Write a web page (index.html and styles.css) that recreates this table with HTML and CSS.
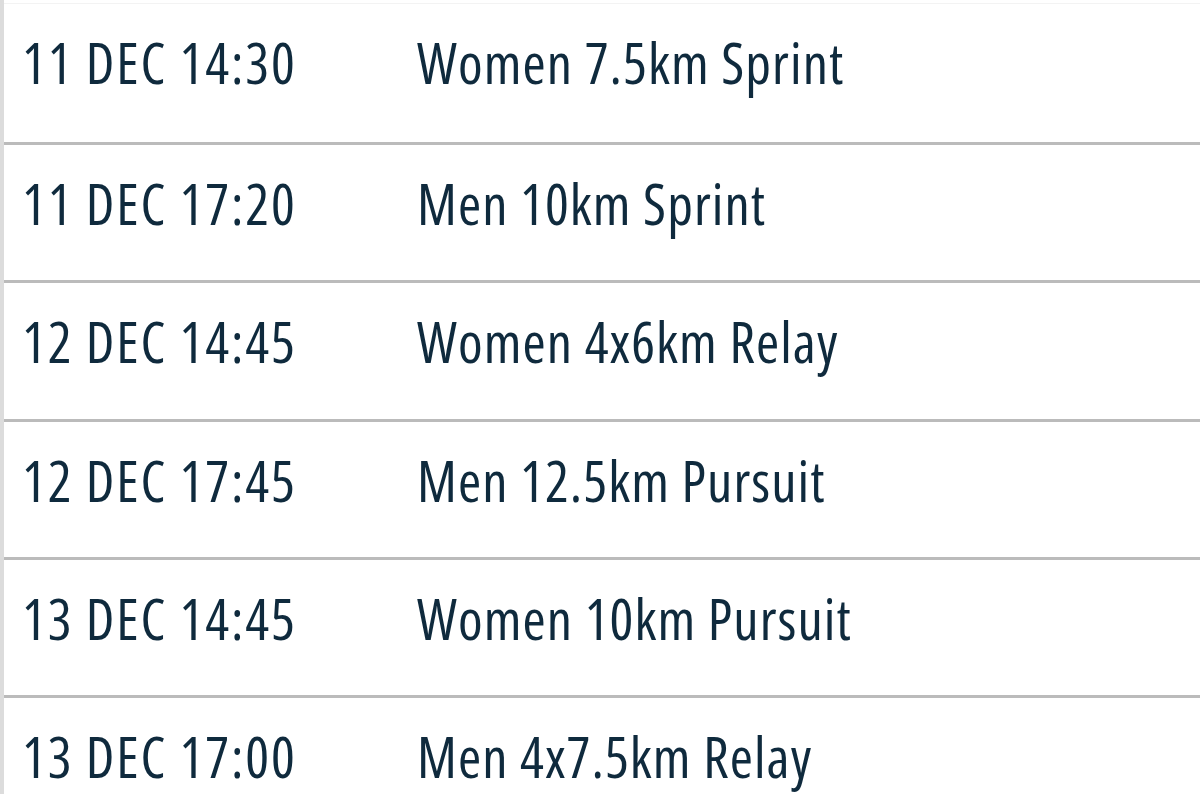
FILE: index.html
```html
<!DOCTYPE html>
<html>
<head>
<meta charset="utf-8">
<link rel="stylesheet" href="styles.css">
</head>
<body>
<div class="list">
  <div class="row"><span class="date">11 DEC 14:30</span><span class="event">Women 7.5km Sprint</span></div>
  <div class="row"><span class="date">11 DEC 17:20</span><span class="event">Men 10km Sprint</span></div>
  <div class="row"><span class="date">12 DEC 14:45</span><span class="event">Women 4x6km Relay</span></div>
  <div class="row"><span class="date">12 DEC 17:45</span><span class="event">Men 12.5km Pursuit</span></div>
  <div class="row"><span class="date">13 DEC 14:45</span><span class="event">Women 10km Pursuit</span></div>
  <div class="row"><span class="date">13 DEC 17:00</span><span class="event">Men 4x7.5km Relay</span></div>
</div>
</body>
</html>
```
FILE: styles.css
```css
html, body { margin: 0; padding: 0; background: #fff; }
body { width: 1200px; height: 794px; overflow: hidden; }
.list { border-left: 4px solid #dcdcdc; height: 794px; overflow: hidden; box-sizing: border-box; padding-top: 3px; }
.list::before { content: ""; display: block; height: 1px; background: #f3f3f3; }
.row {
  display: flex;
  align-items: flex-start;
  height: 135.25px;
  border-bottom: 3px solid #bbbbbb;
  color: #0f2a3d;
  font-family: "Open Sans", "Liberation Sans", sans-serif;
  font-stretch: 75%;
  font-weight: 500;
  font-size: 56px;
  line-height: 1;
}
.row:first-of-type { height: 138px; }
.date { width: 395px; flex: none; padding-left: 18px; padding-top: 30px; white-space: nowrap; letter-spacing: 1.9px; }
.event { padding-top: 30px; white-space: nowrap; letter-spacing: 1.1px; }
```
